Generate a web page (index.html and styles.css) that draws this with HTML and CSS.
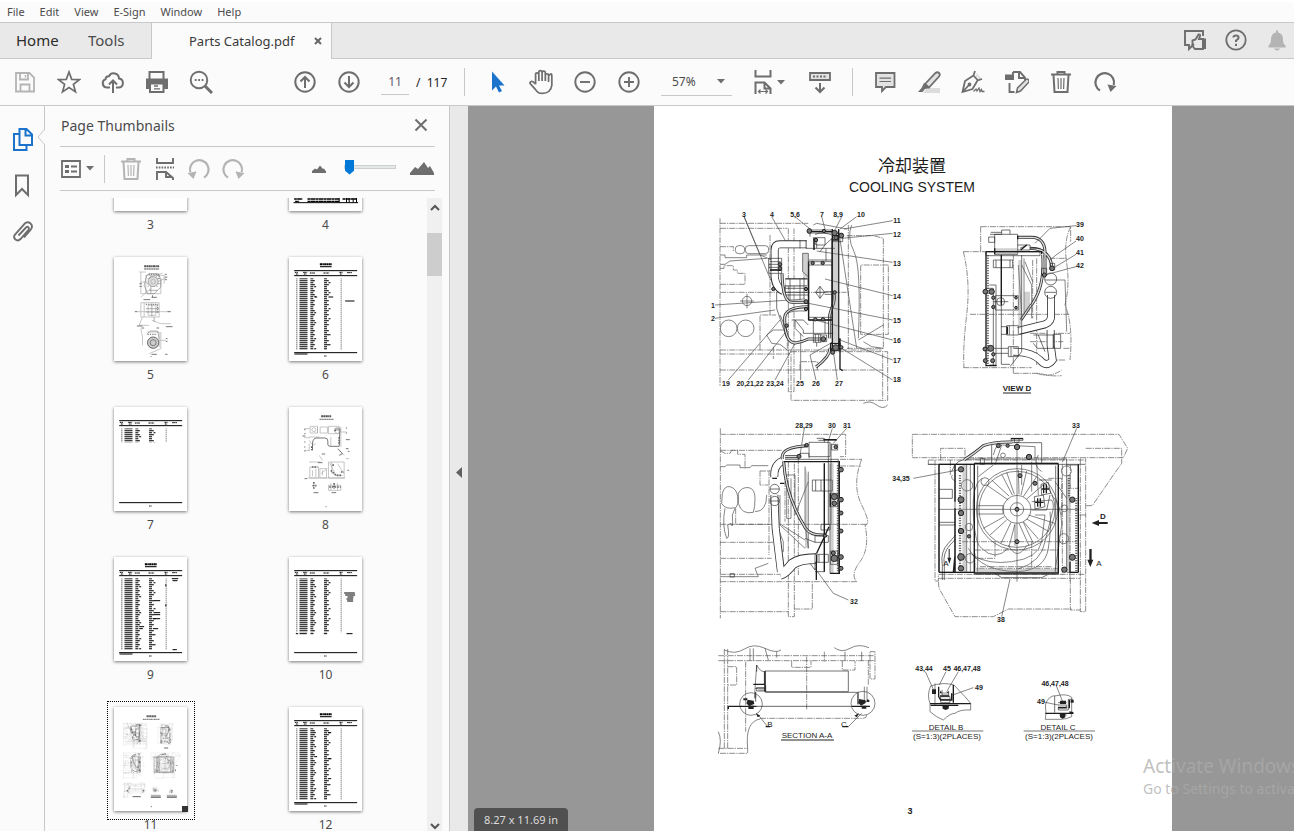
FILE: index.html
```html
<!DOCTYPE html>
<html lang="en">
<head>
<meta charset="utf-8">
<title>Parts Catalog.pdf</title>
<link rel="stylesheet" href="styles.css">
</head>
<body>
<svg class="defs" aria-hidden="true">
  <defs>
    <symbol id="trash" viewBox="0 0 24 24"><path d="M2 4.500h20M8.500 4V2h7v2M4.500 5l1 17h13l1-17" fill="none" stroke="currentColor" stroke-width="2"/><path d="M9 8l.4 11M12 8v11M15 8l-.4 11" stroke="currentColor" stroke-width="1.200"/></symbol>
    <symbol id="rotate" viewBox="0 0 24 24"><path d="M7 20.500A9.300 9.300 0 1 1 20.700 15" fill="none" stroke="currentColor" stroke-width="2.200"/><path d="M14.500 14.500l9 1.500-6 6z" fill="currentColor"/></symbol>
    <symbol id="caret" viewBox="0 0 8 5"><path d="M0 0h8L4 4.500z" fill="currentColor"/></symbol>

    <symbol id="rows" viewBox="0 0 189 216">
      <g fill="none" stroke="#000" stroke-dasharray="3 3">
        <path d="M8 0V216" stroke-width="2.500"/>
        <path d="M28 0V216" stroke-width="24"/>
        <path d="M53 0V216" stroke-width="9"/>
        <path d="M94 0V216" stroke-width="9"/>
        <path d="M141 0V216" stroke-width="2"/>
      </g>
      <g fill="none" stroke="#000">
        <path d="M59 6V216M101 6V216" stroke-width="6" stroke-dasharray="3 9 3 15"/>
        <path d="M63 24V216M106 12V216" stroke-width="6" stroke-dasharray="3 27 3 45"/>
      </g>
    </symbol>
    <symbol id="sheet" viewBox="0 0 218 312">
      <path d="M15 41H204M15 56H204M15 287H204" stroke="#000" stroke-width="3"/>
      <path d="M17 46H27M42 46H54M62 48H77M103 48H120M151 46H160M174 47H188M20 51H27M44 51H52M152 51H159" stroke="#000" stroke-width="3" stroke-dasharray="5 1 3 1"/>
      <path d="M105 297H113" stroke="#000" stroke-width="3" stroke-dasharray="3 1"/>
    </symbol>
    <symbol id="heading" viewBox="0 0 60 20"><path d="M12 6H48" stroke="#000" stroke-width="6" stroke-dasharray="7 1 4 1"/><path d="M13 13H47" stroke="#000" stroke-width="4" stroke-dasharray="5 1"/></symbol>

    <symbol id="figures" viewBox="654 106 518 733">
      <!-- left side elevation -->
      <svg x="700" y="205" width="215" height="205" viewBox="0 0 645 615">
        <g class="phantom">
          <path d="M60 40V545M60 55H325M60 70H262M60 262H440M60 435H545M60 447H270M60 495H550M265 70V560H282V70M273 440H563V586H273zM548 445V586M440 92H520L550 100V430H440M565 180H482V388H565zM445 60V432"/>
          <path d="M60 125H100V140M60 190H72V182H100V195H112V205H135V238H60"/>
          <path d="M180 435V330H228M210 90V330M300 495V470H352V495"/>
          <path d="M220 425V462M262 430V400"/>
        </g>
        <g class="thin">
          <path d="M60 150H75V158H140V150H200M60 178H75L90 168 200 160"/>
          <rect x="106" y="122" width="28" height="24" rx="10"/><rect x="136" y="122" width="70" height="24" rx="10"/>
          <circle cx="141" cy="288" r="14"/><path d="M120 288H162M141 266V310"/>
          <circle cx="86" cy="370" r="25"/><circle cx="137" cy="370" r="25"/>
          <path d="M132 34L180 150M132 34L212 225M180 150L240 175M215 35L258 110M285 35L330 72M365 35L375 72M425 35L405 75M470 35L420 72M578 47L432 72M578 85L425 100M578 172L350 138M578 272L375 222M578 345L300 290M578 405L345 345M578 465L420 405M578 525L425 430"/>
          <path d="M45 300L315 282M45 340L225 315M85 525L240 345M145 525L262 375M225 525L285 415M302 525V385M348 525L330 450 400 410M412 525L400 440"/>
          <path d="M475 405L550 360M490 410L515 425 550 430M455 60Q440 95 462 140T475 400M418 90L470 430M490 595Q510 585 530 600T563 600"/>
          <path d="M200 390L215 415 240 418 262 435M200 390L220 375H250"/>
          <path d="M340 60L350 55 440 72"/>
        </g>
        <g class="pipe"><path d="M320 118H240Q224 118 224 135V205"/><path d="M224 205Q222 245 250 258"/><path d="M256 232H322"/></g>
        <g class="pipe-core"><path d="M320 118H240Q224 118 224 135V205"/><path d="M224 200Q222 245 250 258"/><path d="M256 232H322"/></g>
        <g class="tube"><path d="M246 205Q248 295 278 292H325M325 305Q250 305 254 345 255 412 285 414 305 412 325 402H362M402 264Q406 285 395 310L389 330V400M390 430Q390 455 348 486"/></g>
        <g class="tube-core"><path d="M246 205Q248 295 278 292H325M325 305Q250 305 254 345 255 412 285 414 305 412 325 402H362M402 264Q406 285 395 310L389 330V400M390 430Q390 455 348 486"/></g>
        <g class="line">
          <path d="M300 105V130M318 105V130M318 130H405M342 100V135M210 170H242M210 195H242M206 160H245V205H206zM206 178H245M206 187H245"/>
          <path d="M256 240V262H325M256 222H325M256 250H325M256 270H325M270 222V285M300 222V285"/>
          <path d="M230 262V310L260 400M240 330L262 380M262 325Q275 316 320 318"/>
          <path d="M285 345L310 375V385H400M285 345V370L310 395M275 345H310L325 360"/>
          <path d="M325 145H308V200L325 215V145M325 170H396V345H325zM325 180H396M325 337H396M325 165H396M340 345V385M378 130V168M375 345V385M325 215V290M312 215V282"/>
          <path d="M360 244L374 262 360 280 347 262zM347 262H374M360 244V280M374 260H402M374 268H398"/>
          <path d="M340 388V412H362V388zM362 390H380V410H362M350 412V425M346 388V412M356 388V412"/>
          <path d="M340 98H375V120L360 140M350 100V130M398 85H428V110H398zM325 75H398V84H325zM330 72V95M345 88Q370 78 400 92M340 98L348 120H375M375 120Q395 100 400 98"/>
        </g>
        <g class="bold">
          <path d="M397 72V432M416 72V432M326 170V345M420 400V492L428 497M325 345H396M396 100V300"/>
          <path d="M326 80H400M398 92H415V105H398zM392 415H420V435H392zM240 178V198M312 290H325V312H312M390 425L398 440M210 195H245M342 100V135"/>
        </g>
        <path class="shade" d="M398 110V410H416V110zM308 145V210L325 225V145z"/>
        <g class="dots"><circle cx="338" cy="174" r="5"/><circle cx="368" cy="174" r="5"/><circle cx="346" cy="343" r="5"/><circle cx="369" cy="343" r="5"/><circle cx="424" cy="92" r="7"/><circle cx="404" cy="84" r="8"/><circle cx="408" cy="98" r="6"/><circle cx="328" cy="78" r="7"/><circle cx="372" cy="78" r="5"/><circle cx="407" cy="428" r="9"/><circle cx="398" cy="442" r="6"/><circle cx="424" cy="427" r="5"/><circle cx="260" cy="362" r="5"/><circle cx="240" cy="178" r="5"/><circle cx="240" cy="190" r="5"/><circle cx="318" cy="290" r="6"/><circle cx="318" cy="252" r="5"/><circle cx="370" cy="402" r="7"/><circle cx="404" cy="262" r="5"/><circle cx="318" cy="312" r="5"/><circle cx="348" cy="105" r="5"/><circle cx="220" cy="252" r="5"/></g>
      </svg>
      <!-- view D -->
      <svg x="950" y="205" width="150" height="195" viewBox="0 0 450 585">
        <g class="phantom"><path d="M40 140H275M92 65H362V110M92 65V140M40 488H245M60 328H360M190 150V505M260 160V480M248 165V340M240 385H360M240 410H340M340 430H360"/><path d="M40 140Q62 230 50 330T42 488M362 65Q340 110 350 175T345 300Q370 360 360 465M345 465H270M260 505Q300 520 335 495M298 160H350M190 505H270Q300 515 335 512"/></g>
        <g class="pipe"><path d="M205 378L285 358Q305 350 303 330V270"/><path d="M190 440Q245 440 270 465 290 490 308 465L302 420V375"/></g>
        <g class="pipe-core"><path d="M203 378L285 358Q305 350 303 330V270"/><path d="M188 440Q245 440 270 465 290 490 308 465L302 420V375"/></g>
        <g class="tube"><path d="M203 97H245Q283 98 285 140V205M240 130Q300 130 306 188M278 150Q286 250 238 308L213 345"/></g>
        <g class="tube-core"><path d="M203 97H245Q283 98 285 140V205M240 130Q300 130 306 188M278 150Q286 250 238 308L213 345"/></g>
        <g class="line"><path d="M134 88H203V148H134zM116 96H134V112H116zM120 88H155V75H180V88M122 82H155M108 140H270V152H108zM130 165H188V188H130zM138 165V188M180 165V188M154 150V460M215 150V440L180 485M154 460V478H180M108 250H130V480M136 272H205V315H136zM118 240H138V480H118"/>
          <path d="M210 130L232 120M240 130H272M203 120H240V135H203M170 362H205V390H170zM153 365H170V388H153M178 362V390M175 425H205V455H175zM265 390L285 440M130 430H175M130 445H175M183 425V455"/>
          <circle cx="302" cy="222" r="18"/><circle cx="302" cy="262" r="18"/><circle cx="152" cy="290" r="12"/><path d="M130 290H175M275 190H290V212H275zM300 175H314V195H300zM110 430H130M285 225H320M286 262H318M310 388H332V430H310zM250 390H310V430H262L250 415"/></g>
        <g class="thin"><path d="M378 62L300 70 255 115M378 108L318 150 300 165M378 148L312 188M378 185L285 210M320 225H345L350 380M215 180L245 240V340M225 170L248 230M222 160V330M205 180L215 330"/></g>
        <path class="shade" d="M205 165H215V370H205zM134 130H203V150H134zM222 260H240V320H222z"/>
        <g class="bold"><path d="M108 140H275V148M154 150V300M134 130V148M108 140V482H140M172 365V388M230 120L212 135M203 92V103"/></g>
        <path class="hose" d="M113 150V480"/>
        <g class="dots"><circle cx="106" cy="260" r="7"/><circle cx="125" cy="260" r="8"/><circle cx="130" cy="278" r="5"/><circle cx="130" cy="306" r="5"/><circle cx="105" cy="432" r="6"/><circle cx="122" cy="430" r="9"/><circle cx="130" cy="448" r="5"/><circle cx="106" cy="467" r="6"/><circle cx="128" cy="467" r="6"/><circle cx="198" cy="278" r="4"/><circle cx="198" cy="308" r="4"/><circle cx="283" cy="210" r="6"/><circle cx="306" cy="190" r="7"/></g>
      </svg>
      <!-- right side elevation -->
      <svg x="705" y="415" width="170" height="215" viewBox="0 0 510 645">
        <g class="phantom"><path d="M46 40V610M46 58H422V125H405M46 106H230M46 328H485M46 382H230M46 430H200M46 478H240M46 500H455M250 140V605H268V140M46 590H250M268 582H322V500M405 133H470M405 153H468M192 165V420M280 130V480M240 170V320M165 168H200M165 168V210H190"/><path d="M470 133Q440 210 470 270T480 330Q495 400 465 440T455 500M92 280V328H192M46 108L60 115H75L80 106H98V118H120V160"/></g>
        <g class="thin"><path d="M46 155H60L65 150H105V158H135L140 152H190M52 235Q58 212 75 215Q95 220 98 245T92 278Q60 285 50 265zM100 235Q110 215 132 218Q150 222 150 250T145 292Q110 300 100 265zM60 280Q50 330 65 370Q75 370 68 330L78 325Q85 350 82 300L90 280M150 290Q185 290 185 240M46 485H160L150 460 190 445"/>
          <path d="M298 40L285 120M382 40L368 85M425 40L385 85M430 555L385 535 330 460"/><path d="M300 155V330L310 400V170M270 300L310 200M225 240V330L300 400M240 180H270V290M245 195V310H258V190M230 330L300 375M215 330L235 380V410L218 395"/></g>
        <g class="pipe"><path d="M208 186Q206 150 232 138"/><path d="M208 240L212 340 228 470"/><path d="M226 478Q240 475 262 447 285 430 335 431" class="wide"/></g>
        <g class="pipe-core"><path d="M208 186Q206 150 232 138"/><path d="M208 240L212 340 228 474"/><path d="M226 478Q240 475 262 447 285 430 338 431" class="wide"/></g>
        <g class="tube"><path d="M232 132Q225 95 310 92M236 140Q242 245 302 340 316 362 360 360M240 125H282"/></g>
        <g class="tube-core"><path d="M232 132Q225 95 310 92M236 140Q242 245 302 340 316 362 360 360M240 125H282"/></g>
        <g class="line"><path d="M312 82H375V125H312zM335 70H358V82M340 76H395M380 88H398V105H380zM285 130V115H312V130M370 85V330M378 85V330M240 133H400V475M375 145V475M358 145V470H330M322 195H382V228H322zM348 195V228M332 195V228"/>
          <path d="M330 418H370V442H330zM342 418V442M330 362H370V382H330zM348 328H375V345H348zM376 235H398V275H376zM376 408H398V448H376zM330 382L300 370"/>
          <circle cx="209" cy="222" r="14"/><circle cx="209" cy="258" r="14"/><path d="M195 222H223M195 258H223M330 440L330 465 315 445M75 476H88V486H75z"/></g>
        <path class="shade" d="M376 145H386V475H376zM308 180V400H300V150z"/>
        <g class="bold"><path d="M236 140H400M358 145V470M403 138V475H375M376 235V275M334 442V495M372 335L335 415M300 88V96M202 190H216M225 205H238M335 420V442M355 74H395"/></g>
        <path class="hose" d="M399 150V470"/>
        <g class="dots"><circle cx="388" cy="245" r="9"/><circle cx="388" cy="265" r="7"/><circle cx="408" cy="164" r="7"/><circle cx="408" cy="254" r="7"/><circle cx="408" cy="294" r="6"/><circle cx="408" cy="348" r="6"/><circle cx="408" cy="426" r="7"/><circle cx="408" cy="460" r="6"/><circle cx="388" cy="430" r="10"/><circle cx="385" cy="414" r="6"/><circle cx="305" cy="90" r="5"/><circle cx="282" cy="124" r="6"/><circle cx="360" cy="362" r="5"/><circle cx="392" cy="96" r="5"/></g>
      </svg>
      <!-- front elevation with fan -->
      <svg x="885" y="415" width="250" height="215" viewBox="0 0 750 645">
        <g class="phantom"><path d="M82 58H702L728 100 715 128H82zM130 135H600M130 148H270M150 135V498H160V480M586 130V590H602V130M602 100H710V145L685 180 622 272H602M167 135V100H240V135M160 478H600M160 490H586M556 490V585H586M160 500L162 520 210 605H325L370 582H560M532 148V480M556 150V220H580V150M196 135V180M130 135V150M602 300H580V320M555 250V500"/><path d="M232 380H575M270 405H520M270 415V460H520M490 190H530V300M440 380V460M330 380V430H270M285 455H500"/></g>
        <g class="line"><path d="M162 148V472H270M210 148V472M162 223H202V250H162M162 322H212M162 330H212M320 148V83H470V145M268 145H520V478H268zM278 152V470M512 152V470M378 70H414V76H378zM388 70V82H402V70M200 170Q212 128 260 132H545V470M172 495V450Q165 410 190 385L212 360M178 495V450Q172 415 195 390L212 372M330 475L350 488H470L490 478M286 130H298V148H286zM130 148H600M545 150H580V472H545"/></g>
        <g class="tube"><path d="M238 134Q272 112 295 92 325 80 382 81"/></g><g class="tube-core"><path d="M238 134Q272 112 295 92 325 80 382 81"/></g>
        <g class="thin"><circle cx="396" cy="283" r="122"/><circle cx="396" cy="283" r="114"/><circle cx="396" cy="283" r="42"/><circle cx="396" cy="283" r="20"/>
          <path d="M396 80V500M160 283H580M278 272H354V297H278M305 210L370 255M320 195L372 243M350 178L382 240M365 172L388 238M400 165L402 238M425 168L408 240M455 185L415 245M480 205L425 252M430 300L510 325M425 312L492 350M415 320L460 372M402 325L432 392M390 326L372 395M378 322L348 385M365 315L315 360M358 305L295 340M390 330V392M415 322L445 385"/>
          <path d="M280 185L325 150M325 120Q335 80 350 90L330 150M350 90L450 95V130M470 170Q440 150 460 120M290 190Q260 210 265 300T290 400Q330 440 370 400M440 260L500 255Q510 270 500 300L480 380Q470 440 400 462M250 400Q290 470 400 470Q480 465 490 400T495 290M262 420Q310 450 380 440Q460 430 470 380L480 300H450M410 150V210M440 140V230M455 140L460 240M500 240Q530 270 530 330L510 470M510 200L545 250"/>
          <path d="M575 40L532 142M85 190L235 162M350 605L375 492"/>
          <circle cx="246" cy="211" r="17"/><circle cx="544" cy="168" r="15"/><circle cx="536" cy="371" r="15"/><circle cx="255" cy="430" r="14"/><circle cx="252" cy="336" r="11"/><circle cx="538" cy="280" r="10"/><circle cx="300" cy="200" r="12"/><circle cx="354" cy="121" r="7"/><path d="M370 390Q395 440 425 392M202 180Q195 190 212 200M245 150V470M256 150V470"/></g>
        <path class="shade" d="M232 150H246V472H232zM544 190H556V470H544zM268 462H520V478H268z"/>
        <g class="line"><path d="M468 208L490 202 497 235 470 240zM448 245L475 240 480 275 450 282zM460 195H500M440 285H485L495 240"/></g>
        <g class="bold"><path d="M268 148V475M520 148V475M162 148H270M162 472H270M162 148V472M210 280V472M210 150V260M580 148V472M268 145H520M268 474H520M378 71H414M476 208V235M484 208V235M458 250V275M466 250V275M555 440V472H580M210 420L205 472M470 222H492M450 262H476"/></g>
        <path class="hose" d="M225 180V465M574 250V470M552 180V250"/>
        <g class="dots"><circle cx="396" cy="96" r="8"/><circle cx="396" cy="283" r="6"/><circle cx="396" cy="380" r="6"/><circle cx="228" cy="163" r="8"/><circle cx="228" cy="254" r="9"/><circle cx="228" cy="294" r="8"/><circle cx="228" cy="348" r="8"/><circle cx="228" cy="426" r="10"/><circle cx="228" cy="460" r="8"/><circle cx="562" cy="254" r="8"/><circle cx="562" cy="427" r="9"/><circle cx="340" cy="92" r="6"/><circle cx="368" cy="92" r="5"/><circle cx="405" cy="182" r="6"/><circle cx="450" cy="205" r="6"/><circle cx="432" cy="126" r="8"/><circle cx="538" cy="464" r="8"/><circle cx="252" cy="364" r="5"/></g>
        <path class="arrow" d="M668 321v6h-26v6l-22-9 22-9v6zM613 402h7v32h5l-9 22-9-22h6zM191 402h3v26h5l-6 18-6-18h4z"/>
      </svg>
      <!-- section A-A -->
      <svg x="705" y="635" width="180" height="125" viewBox="0 0 540 375">
        <g class="phantom"><path d="M40 62H510M40 77H510M58 42V340M68 42V340M122 80V290M40 340H128V355H40M165 250H475Q485 250 485 240M495 50H510V132H495zM490 75V150M68 95H95V150H68M305 65V225M260 78V97H318V78M412 78V105H450V78M358 50V80M215 50V70"/></g>
        <g class="thin"><path d="M58 45Q90 60 118 42T180 40T228 45M388 38Q410 55 435 40T492 38M180 40L190 75M135 40V78M145 40V78M420 50V78M470 50V78M40 290Q52 315 40 355M128 340Q120 260 165 252M160 240L188 275M470 235L430 275M148 190L155 90Q165 110 178 110V150M160 165H182M478 155V200H486V155"/><circle cx="138" cy="207" r="34"/><circle cx="474" cy="205" r="36"/></g>
        <g class="line"><path d="M180 108H430V170H180zM182 150V172H460V208M152 170V190M150 160H180M155 158H180V168H155zM70 215V222"/></g>
        <g class="bold"><path d="M70 214H155M70 214V222M440 214H495M145 148H180M180 108V170M182 275H196M412 275H430"/><path d="M155 214H440M152 172V200M458 175V208M155 90V110" stroke-width="2"/></g>
        <path class="arrow" d="M152 234l14 8-8 5zM462 234l-14 8 8 5z"/>
        <path class="blob" d="M115 190h12v6h-12zM128 194l18 3 2 10-16 6-8-8zM130 212h16v10h-16zM462 192l20 4v8l-14 8-8-8zM470 212h14v9h-14zM486 193l7 2v6h-7z"/>
      </svg>
      <!-- details B and C -->
      <svg x="900" y="650" width="220" height="100" viewBox="0 0 660 300">
        <g class="thin"><path d="M90 185V160Q80 135 92 108Q130 95 162 105Q180 125 195 140L212 160V180Q180 178 165 190Q150 190 130 210L110 200 90 185M76 65L100 118M138 65L118 105M175 65L140 125M220 113L158 135M105 100V165"/><path d="M436 208Q440 190 436 165Q445 135 470 137Q500 130 515 142V200Q500 208 480 208H436M468 105L488 155M435 157L475 165"/></g>
        <g class="line"><path d="M126 120V135H146V125M122 140H150V158H122zM122 148H150M464 138V188M474 158H500M474 165H500V175H476M478 195H500M475 172V180H505V148H520"/></g>
        <g class="bold"><path d="M90 161H212M160 105V158M92 166H175M116 110V140L122 150H155V130M120 138H148M128 170H146"/><path d="M436 190H520M508 150V175M474 172H500"/></g>
        <path class="blob" d="M96 118h12v14h-12zM120 122l6 6h14l6-6v8h-26zM128 168h18v8l-9 4-9-4zM480 152h18v10h-18zM480 192h16v10l-8 4-8-4zM508 184l12 2v5h-12zM512 150h9v8h-9z"/>
        <path class="line" d="M36 243H250M371 243H585"/>
      </svg>
    </symbol>
  </defs>
</svg>

<nav class="menubar" aria-label="Application menu">
  <button>File</button><button>Edit</button><button>View</button><button>E-Sign</button><button>Window</button><button>Help</button>
</nav>

<header class="tabbar">
  <button class="tab tab-home">Home</button>
  <button class="tab tab-tools">Tools</button>
  <div class="doc-tab">
    <button class="doc-name">Parts Catalog.pdf</button>
    <button class="tab-close" aria-label="Close tab"><svg width="8" height="8" viewBox="0 0 8 8"><path d="M1 1l6 6M7 1L1 7" stroke="currentColor" stroke-width="2"/></svg></button>
  </div>
  <div class="tab-actions">
    <button aria-label="Feedback"><svg width="24" height="24" viewBox="0 0 24 24" fill="none" stroke="currentColor" stroke-width="1.900"><path d="M20 8V3H2v14h4v4l5-5"/><path d="M9.500 12.500l3-1 3-5q2-.5 1.500 1.500L16 11h4v10h-8l-2.500-3z"/><path d="M19 10.500h4V21h-4z" fill="currentColor" stroke="none"/></svg></button>
    <button aria-label="Help"><svg width="24" height="24" viewBox="0 0 24 24" fill="none" stroke="currentColor" stroke-width="1.800"><circle cx="12" cy="12" r="9.700"/><path d="M9.300 9.500Q9.500 7.500 12 7.500T14.600 9.800Q14.500 11 12 12.500V14" stroke-width="2"/><path d="M12 15.800v2.200" stroke-width="2"/></svg></button>
    <button class="dim" aria-label="Notifications"><svg width="24" height="24" viewBox="0 0 24 24" fill="currentColor"><path d="M11 2.500h2v2q5 1 5 7 0 4.500 2.500 6v2h-17v-2Q6 16 6 11.500q0-6 5-7zM9 20.500h6q-1 2-3 2t-3-2z"/></svg></button>
  </div>
</header>

<div class="toolbar" role="toolbar" aria-label="Main tools">
  <button class="tool dim" aria-label="Save"><svg width="24" height="24" viewBox="0 0 24 24" fill="none" stroke="currentColor" stroke-width="1.800"><path d="M3 3h13.500L21 7.500V21.500H3z"/><path d="M7 3v6.500h8V3M7.500 21.500v-7h9v7"/><path d="M12.500 5v2.500" stroke-width="1.500"/></svg></button>
  <button class="tool" aria-label="Add to starred"><svg width="24" height="24" viewBox="0 0 24 24" fill="none" stroke="currentColor" stroke-width="1.700"><path d="M12 2l2.700 7.300 7.700.3-6 4.800 2.100 7.500-6.500-4.300-6.500 4.300 2.100-7.500-6-4.800 7.700-.3z"/></svg></button>
  <button class="tool" aria-label="Upload to cloud"><svg width="24" height="24" viewBox="0 0 24 24" fill="none" stroke="currentColor" stroke-width="2"><path d="M9 17.500H6A4.300 4.300 0 0 1 4.500 9.200 3 3 0 0 1 8 6.200 5.300 5.300 0 0 1 18 8.400 4.600 4.600 0 0 1 18 17.500H15"/><path d="M12 23V11M8 14.500l4-4 4 4"/></svg></button>
  <button class="tool" aria-label="Print"><svg width="24" height="24" viewBox="0 0 24 24"><path d="M1 9h22v10H1z" fill="currentColor"/><path d="M4.500 9V2h14v7" fill="#fbfbfb" stroke="currentColor" stroke-width="2"/><path d="M5 13.500v8.500h13.500v-8.500z" fill="#fbfbfb" stroke="currentColor" stroke-width="2"/><path d="M1 10.500h22" stroke="currentColor" stroke-width="4"/><path d="M9 16h4M9 18.800h6" stroke="currentColor" stroke-width="1.300"/></svg></button>
  <button class="tool" aria-label="Find text"><svg width="24" height="24" viewBox="0 0 24 24" fill="none" stroke="currentColor"><circle cx="10" cy="10" r="8.300" stroke-width="1.900"/><path d="M16 16l7 7" stroke-width="3"/><path d="M5.800 10h9" stroke-width="1.800" stroke-dasharray="1.800 1.600"/></svg></button>
  <button class="tool first-nav" aria-label="Previous page"><svg width="24" height="24" viewBox="0 0 24 24" fill="none" stroke="currentColor" stroke-width="2"><circle cx="12" cy="12" r="9.700"/><path d="M12 18V7M7.500 11.500L12 7l4.500 4.500"/></svg></button>
  <button class="tool" aria-label="Next page"><svg width="24" height="24" viewBox="0 0 24 24" fill="none" stroke="currentColor" stroke-width="2"><circle cx="12" cy="12" r="9.700"/><path d="M12 6v11M7.500 12.500L12 17l4.500-4.500"/></svg></button>
  <label class="page-box"><input type="text" value="11" aria-label="Page number"><span>/&nbsp; 117</span></label>
  <span class="sep"></span>
  <button class="tool active" aria-label="Select"><svg width="24" height="24" viewBox="0 0 24 24"><path d="M7 1.500v19l4-4 3 6 3-1.500-3-5.500h5.500z" fill="currentColor"/></svg></button>
  <button class="tool" aria-label="Pan"><svg width="26" height="26" viewBox="0 0 24 24" fill="none" stroke="currentColor" stroke-width="1.600"><path d="M7 14V5q0-1.500 1.500-1.500T10 5v6M10 11V3q0-1.500 1.500-1.500T13 3v8M13 11V3.500Q13 2 14.500 2T16 3.500V11M16 11V6q0-1.500 1.500-1.500T19 5.500 20.500 5 22 6.500V15q-1 7.500-9 7.500-4 0-6-3.500L2 13.500Q1.500 12 3 11.500t4 2.500M19 6v6"/></svg></button>
  <button class="tool" aria-label="Zoom out"><svg width="24" height="24" viewBox="0 0 24 24" fill="none" stroke="currentColor" stroke-width="1.900"><circle cx="12" cy="12" r="9.700"/><path d="M7 12h10"/></svg></button>
  <button class="tool" aria-label="Zoom in"><svg width="24" height="24" viewBox="0 0 24 24" fill="none" stroke="currentColor" stroke-width="1.900"><circle cx="12" cy="12" r="9.700"/><path d="M7 12h10M12 7v10"/></svg></button>
  <label class="zoom-box"><select aria-label="Zoom level"><option>57%</option></select><svg width="8" height="5"><use href="#caret"/></svg></label>
  <button class="tool fit" aria-label="Page fit"><svg width="24" height="24" viewBox="0 0 24 24" fill="none" stroke="currentColor" stroke-width="2"><path d="M4.500 0v6.500h15V0M4.500 24V12.500h9l6 6V24M13.500 12.500v6h6"/><path d="M8 21.500h8M9.500 19.500l-2 2 2 2M14.500 19.500l2 2-2 2" stroke-width="1.200"/></svg><svg width="8" height="5"><use href="#caret"/></svg></button>
  <button class="tool" aria-label="Scrolling mode"><svg width="24" height="24" viewBox="0 0 24 24" fill="none" stroke="currentColor" stroke-width="1.800"><path d="M2 3h20v7H2z" fill="#e2e2e2"/><path d="M5 6.500h14" stroke-dasharray="2 1.500"/><path d="M12 13v9M7.500 17.500L12 22l4.500-4.500" stroke-width="2"/></svg></button>
  <span class="sep"></span>
  <button class="tool" aria-label="Comment"><svg width="24" height="24" viewBox="0 0 24 24" fill="#e2e2e2" stroke="currentColor" stroke-width="1.800"><path d="M3 3h18.500v14H13l-4 4v-4H3z"/><path d="M6.500 8.200h11.500M6.500 11.500h11.500" stroke-width="1.200"/></svg></button>
  <button class="tool" aria-label="Highlight"><svg width="24" height="24" viewBox="0 0 24 24"><path d="M10 18h13v5H6z" fill="#dcdcdc"/><path d="M8 14L18.500 3q2-1.500 3.500 0t0 3.500L12 17.500z" fill="#e2e2e2" stroke="currentColor" stroke-width="1.800"/><path d="M7 13l6 5-5 1-2.500 3H1l3.500-4z" fill="currentColor"/></svg></button>
  <button class="tool" aria-label="Sign"><svg width="24" height="24" viewBox="0 0 24 24" fill="none" stroke="currentColor" stroke-width="1.800"><path d="M15.500 3l6 6-3 1-4-4z" fill="#e2e2e2" stroke="none"/><path d="M14 1l-1.500 4.500L4 11 1.500 22l10-3 5-8.500L21 9M12.500 5.500l4.500 5M2 21.500l5.500-6"/><circle cx="8.500" cy="14.500" r="1"/><path d="M12.500 21.500l2.500-2.500 1 2 2-3 1 3.500 1.500-2 .5 2h2.500" stroke-width="1.300"/></svg></button>
  <button class="tool" aria-label="Edit PDF"><svg width="24" height="24" viewBox="0 0 24 24" fill="none" stroke="currentColor" stroke-width="1.900"><path d="M8 2h7l5 5.500v2.500M14 2v6h6M4.500 13v9h5M8 2v3"/><path d="M0 4.500h9v5.500H0z" fill="currentColor" stroke="none"/><path d="M11.500 22.500l1-4.500L21 9.500q1.500-1 2.500.3t.2 2.400L15.500 21z" fill="#e2e2e2" stroke-width="1.500"/></svg></button>
  <button class="tool" aria-label="Delete pages"><svg width="24" height="24"><use href="#trash"/></svg></button>
  <button class="tool" aria-label="Rotate pages"><svg width="24" height="24"><use href="#rotate"/></svg></button>
</div>

<div class="workspace">
  <nav class="rail" aria-label="Panels">
    <button class="active" aria-label="Page Thumbnails"><svg width="24" height="26" viewBox="0 0 24 26" fill="none" stroke="currentColor" stroke-width="2"><path d="M8.500 2h7l5.500 5.500V18H8.500zM14.500 2v6.500H21M8 7H3v16h12.500v-5"/></svg></button>
    <button aria-label="Bookmarks"><svg width="24" height="26" viewBox="0 0 24 26" fill="none" stroke="currentColor" stroke-width="2"><path d="M5 2.500h12V22l-6-6-6 6z"/></svg></button>
    <button aria-label="Attachments"><svg width="24" height="26" viewBox="0 0 24 26" fill="none" stroke="currentColor" stroke-width="1.900"><path d="M7.500 16.500L15 8.500q1.500-1.200 2.500-.2t0 2.500L9.500 20q-2.500 2.500-5 .5t-.5-5L13.500 4.800Q16.500 2 19.500 4.500T19.500 11L13 18.500"/></svg></button>
    <svg class="notch" width="8" height="16" viewBox="0 0 8 16"><path d="M8 0L1 8l7 8" fill="#fbfbfb" stroke="#c8c8c8"/></svg>
  </nav>

  <section class="panel" aria-label="Page Thumbnails">
    <div class="panel-head"><h2>Page Thumbnails</h2><button aria-label="Close panel"><svg width="14" height="14" viewBox="0 0 14 14"><path d="M1.500 1.500l11 11M12.500 1.500l-11 11" stroke="currentColor" stroke-width="2"/></svg></button></div>
    <div class="panel-tools">
      <button class="opts" aria-label="Options"><svg width="20" height="18" viewBox="0 0 20 18" fill="none" stroke="currentColor" stroke-width="1.800"><path d="M1 1h18v16H1z"/><path d="M4 6.500h4M4 11.500h4" stroke-width="3"/><path d="M10 6.500h6M10 11.500h6"/></svg><svg width="8" height="5"><use href="#caret"/></svg></button>
      <span class="sep"></span>
      <button class="dim" aria-label="Delete pages"><svg width="24" height="24"><use href="#trash"/></svg></button>
      <button aria-label="Insert pages"><svg width="24" height="22" viewBox="-2 0 24 22" fill="none" stroke="currentColor" stroke-width="1.900"><path d="M2 0v5h16V0M2 22v-8h9l7 6v2M11 14v5h6"/><path d="M1 9.500h18" stroke-dasharray="1.600 1.200"/></svg></button>
      <button class="dim" aria-label="Rotate left"><svg width="24" height="24" viewBox="0 0 24 24"><path d="M17 20.500A9.300 9.300 0 1 0 3.300 15" fill="none" stroke="currentColor" stroke-width="2.200"/><path d="M9.500 14.500L.5 16l6 6z" fill="currentColor"/></svg></button>
      <button class="dim" aria-label="Rotate right"><svg width="24" height="24"><use href="#rotate"/></svg></button>
      <span class="size">
        <svg width="14" height="8" viewBox="0 0 14 8"><path d="M0 8V6l3-2.500 2 1L8 .5l3 3.500 1-.5 2 3V8z" fill="currentColor"/></svg>
        <input type="range" min="0" max="100" value="0" aria-label="Thumbnail size">
        <svg width="24" height="13" viewBox="0 0 24 13"><path d="M0 13v-2l5-6 3 2 6-7 4 6 2-2 4 7v2z" fill="currentColor"/></svg>
      </span>
    </div>
    <div class="thumb-area">
      <div class="thumb-scroll">
        <div class="thumbs">
          <button class="thumb"><svg viewBox="0 0 218 312"></svg><span>3</span></button>
          <button class="thumb"><svg viewBox="0 0 218 312"><path d="M13 287H207M150 260V287M172 260V287M180 260V287M192 260V287M202 260V287" stroke="#000" stroke-width="3"/><path d="M15 276H40M55 276H150M160 276H203M18 283H30M55 283H150" stroke="#000" stroke-width="4" stroke-dasharray="8 1 14 1"/></svg><span>4</span></button>
          <button class="thumb"><svg viewBox="0 0 218 312"><path d="M90 28H135" stroke="#555" stroke-width="6" stroke-dasharray="7 1 4 1"/><path d="M90 36H135" stroke="#888" stroke-width="4" stroke-dasharray="6 1"/>
            <g fill="none" stroke="#aaa" stroke-width="2"><path d="M80 45V110H95V55H150V80M75 45H95M145 48L110 60M80 75H100M160 60L130 75M140 65V110H95M110 95L80 120M80 137H135V180H80zM68 164H165M90 137V180M102 145H125V175H102zM85 180L75 205H105M113 190L140 200H170M80 215L85 240V265M100 225H135V270M140 225V275L105 290M135 250H155" /><path d="M98 55L105 50H130L140 65V90L120 110H100L90 85zM105 60L130 90M130 55L100 90M100 65H135M105 100H130M98 80H140M110 55V108M120 180V195M98 230L110 222H130L135 245M95 155H135M95 165H135M113 140V178" stroke="#888"/></g>
            <circle cx="117" cy="74" r="15" fill="#ddd" stroke="#888" stroke-width="2"/><circle cx="117" cy="74" r="7" fill="none" stroke="#777"/><circle cx="117" cy="257" r="17" fill="#ccc" stroke="#666" stroke-width="3"/><circle cx="117" cy="257" r="9" fill="none" stroke="#555" stroke-width="2"/><path d="M103 52H135V70M95 142H130V170M100 232H128" stroke="#888" stroke-width="4" stroke-dasharray="4 3" fill="none"/>
            <path d="M112 121H128M112 292H128M88 128H108M62 164H69M160 164H170M68 207H85M155 209H175M153 292H160M76 80H83M76 88H83M152 52H158M152 60H158M152 68H158M155 245H160M155 253H160M109 299H112M127 213H135M82 213H90M115 115V120" stroke="#777" stroke-width="3"/></svg><span>5</span></button>
          <button class="thumb"><svg viewBox="0 0 218 312"><use href="#sheet"/><use href="#heading" x="80" y="16" width="60" height="20"/><use href="#rows" x="15" y="64" width="189" height="216"/><path d="M78 120H84M118 120H132M168 132H196M16 291H55" stroke="#000" stroke-width="3"/></svg><span>6</span></button>
          <button class="thumb"><svg viewBox="0 0 218 312"><use href="#sheet"/><svg y="64" width="218" height="42"><use href="#rows" x="15" width="189" height="216"/></svg></svg><span>7</span></button>
          <button class="thumb"><svg viewBox="0 0 218 312"><path d="M96 28H126" stroke="#555" stroke-width="6" stroke-dasharray="7 1 4 1"/><path d="M91 37H134" stroke="#888" stroke-width="4" stroke-dasharray="6 1"/>
            <g fill="none" stroke="#aaa" stroke-width="2"><path d="M63 58H85V78H63zM93 60H115V78H93zM118 58H150V80H118zM60 90H90M125 90V120M155 60V120M60 110V132M45 65H62M45 92H62M45 130H62M155 75H172M150 130L165 145M60 165H95M62 180H88V213H62zM92 185H112V213H92zM118 165H165V213H118zM122 168L140 205H160M128 165V200M145 170L165 200M70 190V208M80 185V210M100 190V205M95 200L115 185M55 213H168M170 155H180M118 235H155V250H118zM125 228V250M145 228V250M90 145L100 160M60 100Q70 120 80 110M135 70H150M85 60V78"/><circle cx="74" cy="68" r="6"/><circle cx="145" cy="70" r="9"/></g>
            <path d="M70 130V108Q72 93 82 93H108Q116 93 116 103V112Q116 118 124 118H150Q152 70 152 66H138M146 125L160 140 150 145" fill="none" stroke="#777" stroke-width="3"/><path d="M68 180H85M125 190L140 205H158M132 172V180M155 195H164M74 225V245M70 236H82M120 240H155M135 228V245M68 118V130M138 68V76M150 90V110" stroke="#666" stroke-width="5" stroke-dasharray="5 3" fill="none"/>
            <path d="M45 68H49M45 80H49M40 87H49M45 105H49M45 120H49M45 132H49M170 63H174M170 78H174M170 98H182M170 125H178M176 133H181M46 215H54M98 141H108M175 190H180M73 257H88M127 257H141M109 299H112M86 167H100" stroke="#777" stroke-width="3"/></svg><span>8</span></button>
          <button class="thumb"><svg viewBox="0 0 218 312"><use href="#sheet"/><use href="#heading" x="80" y="16" width="60" height="20"/><use href="#rows" x="15" y="64" width="189" height="216"/><path d="M173 65H192M175 71H190M118 131H138M118 167H138M118 173H138M115 185H138M75 209H90M75 215H86M116 215H132M175 278H188M16 291H55M155 82V88M155 142V148" stroke="#000" stroke-width="3"/></svg><span>9</span></button>
          <button class="thumb"><svg viewBox="0 0 218 312"><use href="#sheet"/><svg y="64" width="218" height="162"><use href="#rows" x="15" width="189" height="216"/></svg><path d="M165 108H197M168 114H198M175 120H193M172 126H192M174 132H192M172 230H190M20 230H27M31 230H53M64 230H73M104 230H114" stroke="#000" stroke-width="3"/></svg><span>10</span></button>
          <button class="thumb selected" aria-current="page"><svg viewBox="0 0 218 312"><path d="M97 28H126" stroke="#666" stroke-width="6" stroke-dasharray="7 1 6 1"/><path d="M86 37H136" stroke="#888" stroke-width="4" stroke-dasharray="6 1 3 1"/><use href="#figures" width="218" height="308"/><path d="M150 123H162M55 269H80M110 267H140M110 271H140M158 267H188M158 271H188M110 299H113" stroke="#666" stroke-width="3"/></svg><span>11</span></button>
          <button class="thumb"><svg viewBox="0 0 218 312"><use href="#sheet"/><use href="#heading" x="80" y="16" width="60" height="20"/><use href="#rows" x="15" y="64" width="189" height="216"/><path d="M72 77H80M116 77H126M75 149H84M115 155H127M116 215H126M16 291H55" stroke="#000" stroke-width="3"/></svg><span>12</span></button>
        </div>
      </div>
      <div class="scrollbar" aria-hidden="true"><svg width="10" height="7" viewBox="0 0 10 7"><path d="M1 6l4-4 4 4" fill="none" stroke="#555" stroke-width="2"/></svg><i></i><svg width="10" height="7" viewBox="0 0 10 7"><path d="M1 1l4 4 4-4" fill="none" stroke="#555" stroke-width="2"/></svg></div>
    </div>
  </section>

  <button class="splitter" aria-label="Collapse panel"><svg width="6" height="11" viewBox="0 0 6 11"><path d="M6 0v11L0 5.500z" fill="#606060"/></svg></button>

  <main class="viewer">
    <article class="page">
      <svg class="sheet" viewBox="654 106 518 733" role="img" aria-label="Cooling system">
        <use href="#figures" x="654" y="106" width="518" height="733"/>
        <text class="cjk" x="912" y="172">冷却装置</text>
        <text class="title" x="912" y="192">COOLING SYSTEM</text>
        <g class="num">
          <text x="744" y="217">3</text><text x="772" y="217">4</text><text x="795" y="217">5,6</text><text x="822" y="217">7</text><text x="838" y="217">8,9</text><text x="861" y="217">10</text><text x="897" y="223">11</text><text x="897" y="237">12</text><text x="897" y="266">13</text><text x="897" y="299">14</text><text x="897" y="323">15</text><text x="897" y="343">16</text><text x="897" y="363">17</text><text x="897" y="382">18</text><text x="713" y="308">1</text><text x="713" y="321">2</text>
          <text x="726" y="386">19</text><text x="750" y="386">20,21,22</text><text x="775" y="386">23,24</text><text x="800" y="386">25</text><text x="816" y="386">26</text><text x="839" y="386">27</text>
          <text x="1080" y="227">39</text><text x="1080" y="241">40</text><text x="1080" y="255">41</text><text x="1080" y="268">42</text>
          <text x="804" y="428">28,29</text><text x="832" y="428">30</text><text x="847" y="428">31</text><text x="854" y="604">32</text>
          <text x="1076" y="428">33</text><text x="901" y="481">34,35</text><text x="1001" y="622">38</text>
          <text x="924" y="671">43,44</text><text x="947" y="671">45</text><text x="967" y="671">46,47,48</text><text x="979" y="690">49</text><text x="1055" y="686">46,47,48</text><text x="1041" y="704">49</text>
        </g>
        <g class="cap"><text x="770" y="727">B</text><text x="844" y="727">C</text><text x="946" y="566">A</text><text x="1099" y="566">A</text><text class="strong" x="1103" y="519">D</text><text class="strong" x="1017" y="391">VIEW D</text><text x="807" y="738">SECTION A-A</text><text x="946" y="730">DETAIL B</text><text x="947" y="739">(S=1:3)(2PLACES)</text><text x="1058" y="730">DETAIL C</text><text x="1059" y="739">(S=1:3)(2PLACES)</text></g>
        <path d="M1003 393H1031M781 740H834" stroke="#222"/>
        <text class="folio" x="910" y="814">3</text>
      </svg>
    </article>
    <div class="page-size">8.27 x 11.69 in</div>
    <div class="watermark"><p class="wm-title">Activate Windows</p><p>Go to Settings to activate Windows.</p></div>
  </main>
</div>
</body>
</html>
```
FILE: styles.css
```css
* { box-sizing: border-box; }
body {
  margin: 0;
  height: 100vh;
  display: flex;
  flex-direction: column;
  overflow: hidden;
  background: #fbfbfb;
  color: #4b4b4b;
  font-family: "Noto Sans", "Open Sans", sans-serif;
  font-size: 12px;
}
button, input, select { font: inherit; color: inherit; background: none; border: 0; padding: 0; margin: 0; border-radius: 0; }
button { display: flex; align-items: center; justify-content: center; }
svg { display: block; flex: none; }
.defs { position: absolute; width: 0; height: 0; }
.dim { color: #b4b4b4 !important; }
.sep { width: 1px; background: #c8c8c8; }

.menubar { display: flex; gap: 15px; height: 23px; padding: 0 7px 2px; border-top: 2px solid #fff; border-bottom: 1px solid #c8c8c8; flex: none; font-size: 11px; }

.tabbar { display: flex; height: 36px; flex: none; background: #e9e9e9; box-shadow: inset 0 -1px #c8c8c8; }
.tab { font-size: 15px; padding: 0 0 2px 16px; }
.tab-home { color: #2c2c2c; width: 72px; justify-content: flex-start; }
.tab-tools { width: 79px; justify-content: flex-start; }
.doc-tab { display: flex; align-items: center; justify-content: space-between; width: 181px; padding: 0 9px 0 37px; background: #fbfbfb; border: solid #c8c8c8; border-width: 0 1px; color: #3a3a3a; font-size: 13px; }
.tab-close { color: #666; }
.tab-actions { display: flex; margin-left: auto; padding: 0 5px 2px; gap: 17px; color: #6e6e6e; }

.toolbar { display: flex; align-items: center; height: 47px; flex: none; padding-left: 3px; border-bottom: 1px solid #c8c8c8; color: #6e6e6e; }
.tool { width: 44px; height: 44px; }
.first-nav { margin-left: 60px; }
.active { color: #1b73cc; }
.toolbar .sep { height: 28px; margin: 0 10px; }
.page-box { display: flex; align-items: center; gap: 7px; width: 83px; padding-left: 10px; color: #222; }
.page-box input { width: 28px; height: 26px; text-align: center; color: #635a6b; border-bottom: 1px solid #c8c8c8; }
.page-box span { white-space: nowrap; }
.zoom-box { display: flex; align-items: center; width: 71px; height: 28px; margin-left: 10px; padding-right: 7px; border-bottom: 1px solid #c8c8c8; color: #6e6e6e; }
.zoom-box select { flex: 1; appearance: none; padding-left: 11px; color: #4b4b4b; }
.fit { width: 48px; margin: 0 6px 0 12px; gap: 2px; }

.workspace { display: flex; flex: 1; min-height: 0; }
.rail { position: relative; width: 45px; flex: none; display: flex; flex-direction: column; gap: 20px; padding: 21px 0 0 11px; border-right: 1px solid #c8c8c8; color: #6e6e6e; }
.rail button { width: 24px; height: 26px; }
.notch { position: absolute; right: -1px; top: 23px; }

.panel { width: 405px; flex: none; display: flex; flex-direction: column; border-right: 1px solid #c8c8c8; color: #6e6e6e; }
.panel-head { display: flex; align-items: center; justify-content: space-between; height: 41px; flex: none; margin: 0 14px 0 15px; padding: 0 7px 2px 1px; border-bottom: 1px solid #c8c8c8; }
.panel-head h2 { margin: 0; font-size: 14px; font-weight: 400; color: #4b4b4b; }
.panel-tools { display: flex; align-items: center; height: 44px; flex: none; margin: 0 14px 0 15px; border-bottom: 1px solid #c8c8c8; gap: 10px; }
.panel-tools .sep { height: 28px; margin-right: 4px; }
.opts { gap: 5px; padding-left: 1px; }
.size { display: flex; align-items: center; gap: 16px; margin: 0 1px 0 auto; }
.size input { width: 52px; height: 20px; margin: 0 -2px 4px 2px; appearance: none; }
.size input::-webkit-slider-runnable-track { height: 4px; background: #e6e8e8; border: 1px solid #ccd0d0; }
.size input::-webkit-slider-thumb { appearance: none; width: 9px; height: 15px; margin-top: -6px; background: #0078d7; clip-path: polygon(0 0, 100% 0, 100% 75%, 50% 100%, 0 75%); }
.thumb-area { display: flex; flex: 1; min-height: 0; margin-top: 7px; }
.thumb-scroll { flex: 1; overflow: hidden; padding-left: 18px; }
.thumbs { display: grid; grid-template-columns: 175px 175px; grid-auto-rows: 150px; margin-top: -91px; }
.thumb { flex-direction: column; justify-content: flex-start; position: relative; color: #4b4b4b; }
.thumb svg { overflow: hidden; }
.thumb > svg { width: 73px; height: 104px; background: #fff; box-shadow: 0 1px 3px #777; }
.thumb > span { margin-top: 8px; line-height: 12px; }
.selected::before { content: ""; position: absolute; top: -6px; width: 86px; height: 117px; border: 1px dotted #000; }
.selected::after { content: ""; position: absolute; top: 99px; left: 119px; width: 6px; height: 6px; background: #333; }
.scrollbar { width: 15px; margin-right: 7px; display: flex; flex-direction: column; align-items: center; padding: 6px 0 1px; background: #f0f0f0; }
.scrollbar i { width: 15px; height: 43px; margin: 22px 0 auto; background: #cdcdcd; }

.splitter { width: 18px; flex: none; padding-top: 8px; background: #e9e9e9; }
.viewer { position: relative; flex: 1; min-width: 0; overflow: hidden; padding: 0 122px 0 186px; background: #979797; }
.page { background: #fff; }
.sheet { width: 100%; height: auto; }
.page-size { position: absolute; left: 6px; bottom: 0; height: 23px; padding: 0 10px; line-height: 23px; font-size: 11px; border-radius: 4px 4px 0 0; background: #505050; color: #dcdcdc; }
.watermark { position: absolute; left: 675px; bottom: 32px; white-space: nowrap; color: rgba(171, 171, 171, 0.75); font-size: 14px; line-height: 20px; }
.watermark p { margin: 0; }
.watermark .wm-title { font-size: 19px; line-height: 26px; }

.phantom, .thin, .line, .bold, .pipe, .pipe-core, .tube, .tube-core { fill: none; }
.phantom { stroke: #555; stroke-width: 2; stroke-dasharray: 18 3 4 3; }
.thin { stroke: #484848; stroke-width: 2; }
.line { stroke: #2e2e2e; stroke-width: 2; }
.bold { stroke: #1c1c1c; stroke-width: 4; }
.pipe { stroke: #333; stroke-width: 24; }
.pipe-core { stroke: #fff; stroke-width: 19; }
.pipe .wide { stroke-width: 32; }
.pipe-core .wide { stroke-width: 27; }
.tube { stroke: #333; stroke-width: 9; }
.tube-core { stroke: #ddd; stroke-width: 4; }
.hose { fill: none; stroke: #444; stroke-width: 7; stroke-dasharray: 2 3; }
.shade { fill: #777; fill-opacity: 0.35; }
.dots { fill: #777; stroke: #222; stroke-width: 3; }
.arrow, .blob { fill: #222; }
.sheet text { font-family: "Liberation Sans", "Noto Sans CJK JP", sans-serif; text-anchor: middle; fill: #1c1c1c; }
.sheet .cjk { font-family: "Noto Sans CJK JP", sans-serif; font-size: 17px; }
.sheet .title { font-size: 14px; }
.num text { font-size: 7px; font-weight: 700; }
.cap text { font-size: 8px; }
.cap .strong { font-weight: 700; }
.sheet .folio { font-size: 9px; font-weight: 700; }
```
